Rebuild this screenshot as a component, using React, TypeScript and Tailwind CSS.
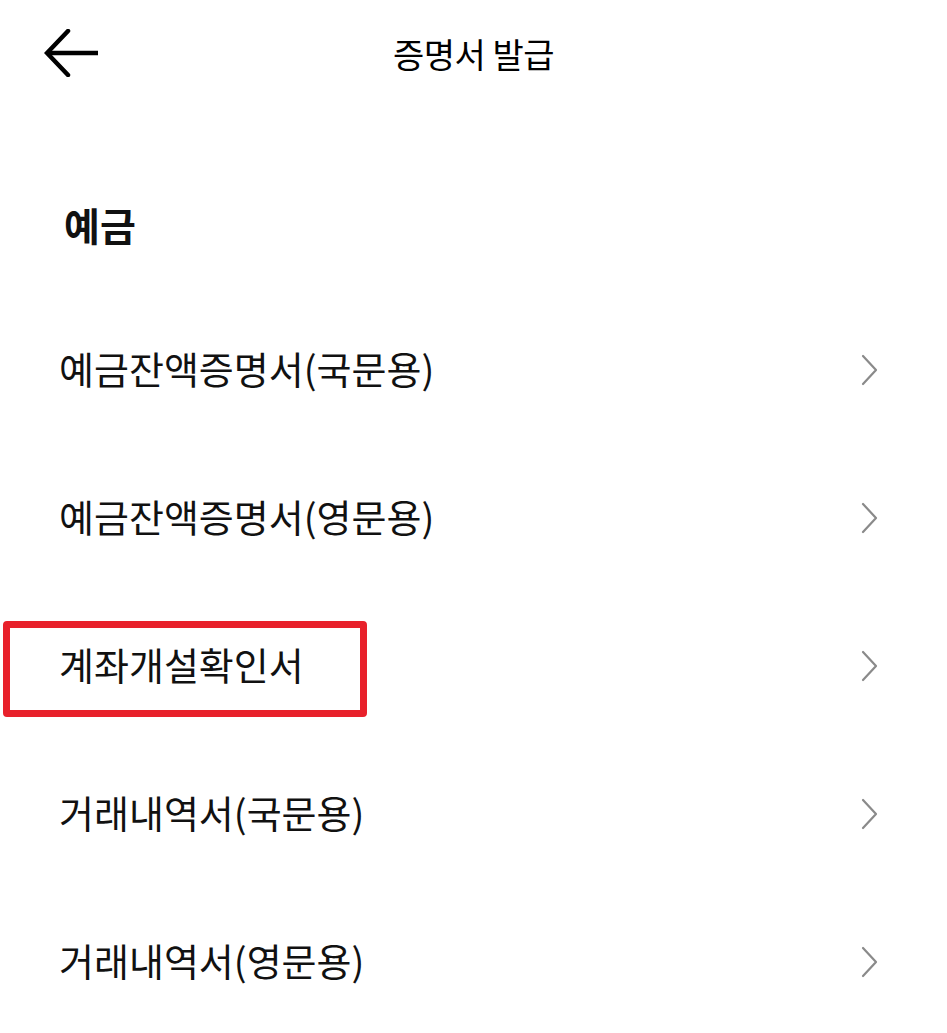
import React from "react";

const rows = [
  "예금잔액증명서(국문용)",
  "예금잔액증명서(영문용)",
  "계좌개설확인서",
  "거래내역서(국문용)",
  "거래내역서(영문용)",
];

function Chevron() {
  return (
    <svg width="18" height="32" viewBox="0 0 18 32" fill="none">
      <path d="M2 2 L15 16 L2 30" stroke="#8a8a8a" strokeWidth="2.2" strokeLinecap="round" strokeLinejoin="round" />
    </svg>
  );
}

export default function App() {
  return (
    <div
      className="w-[947px] h-[1033px] bg-white overflow-hidden text-[#111]"
      style={{ fontFamily: '"Noto Sans CJK KR", "Noto Sans", sans-serif' }}
    >
      <header className="relative h-[110px] flex items-center justify-center">
        <div className="absolute left-[44px] top-[29px]">
          <svg width="56" height="48" viewBox="0 0 56 48" fill="none">
            <path d="M24 2 L3 24 L24 46" stroke="#000" strokeWidth="4.5" strokeLinecap="round" strokeLinejoin="miter" />
            <path d="M4 24 H54" stroke="#000" strokeWidth="4.5" />
          </svg>
        </div>
        <h1 className="text-[34px] leading-[40px] font-normal text-black tracking-[-0.5px] -mt-[2px]">증명서 발급</h1>
      </header>
      <div className="h-[186px] pt-[91px] pl-[64px]">
        <div className="text-[39px] leading-[46px] font-bold">예금</div>
      </div>
      <div>
        {rows.map((r, i) => (
          <div key={r} className="relative h-[148px] flex items-center justify-between pl-[59px] pr-[68px]">
            <span className="text-[38px] leading-[46px] font-normal -mt-[4px]">{r}</span>
            <Chevron />
            {i === 2 && (
              <div className="absolute left-[3px] top-[29px] w-[364px] h-[96px] border-[7px] border-[#e8212b] rounded-[4px]" />
            )}
          </div>
        ))}
      </div>
    </div>
  );
}
